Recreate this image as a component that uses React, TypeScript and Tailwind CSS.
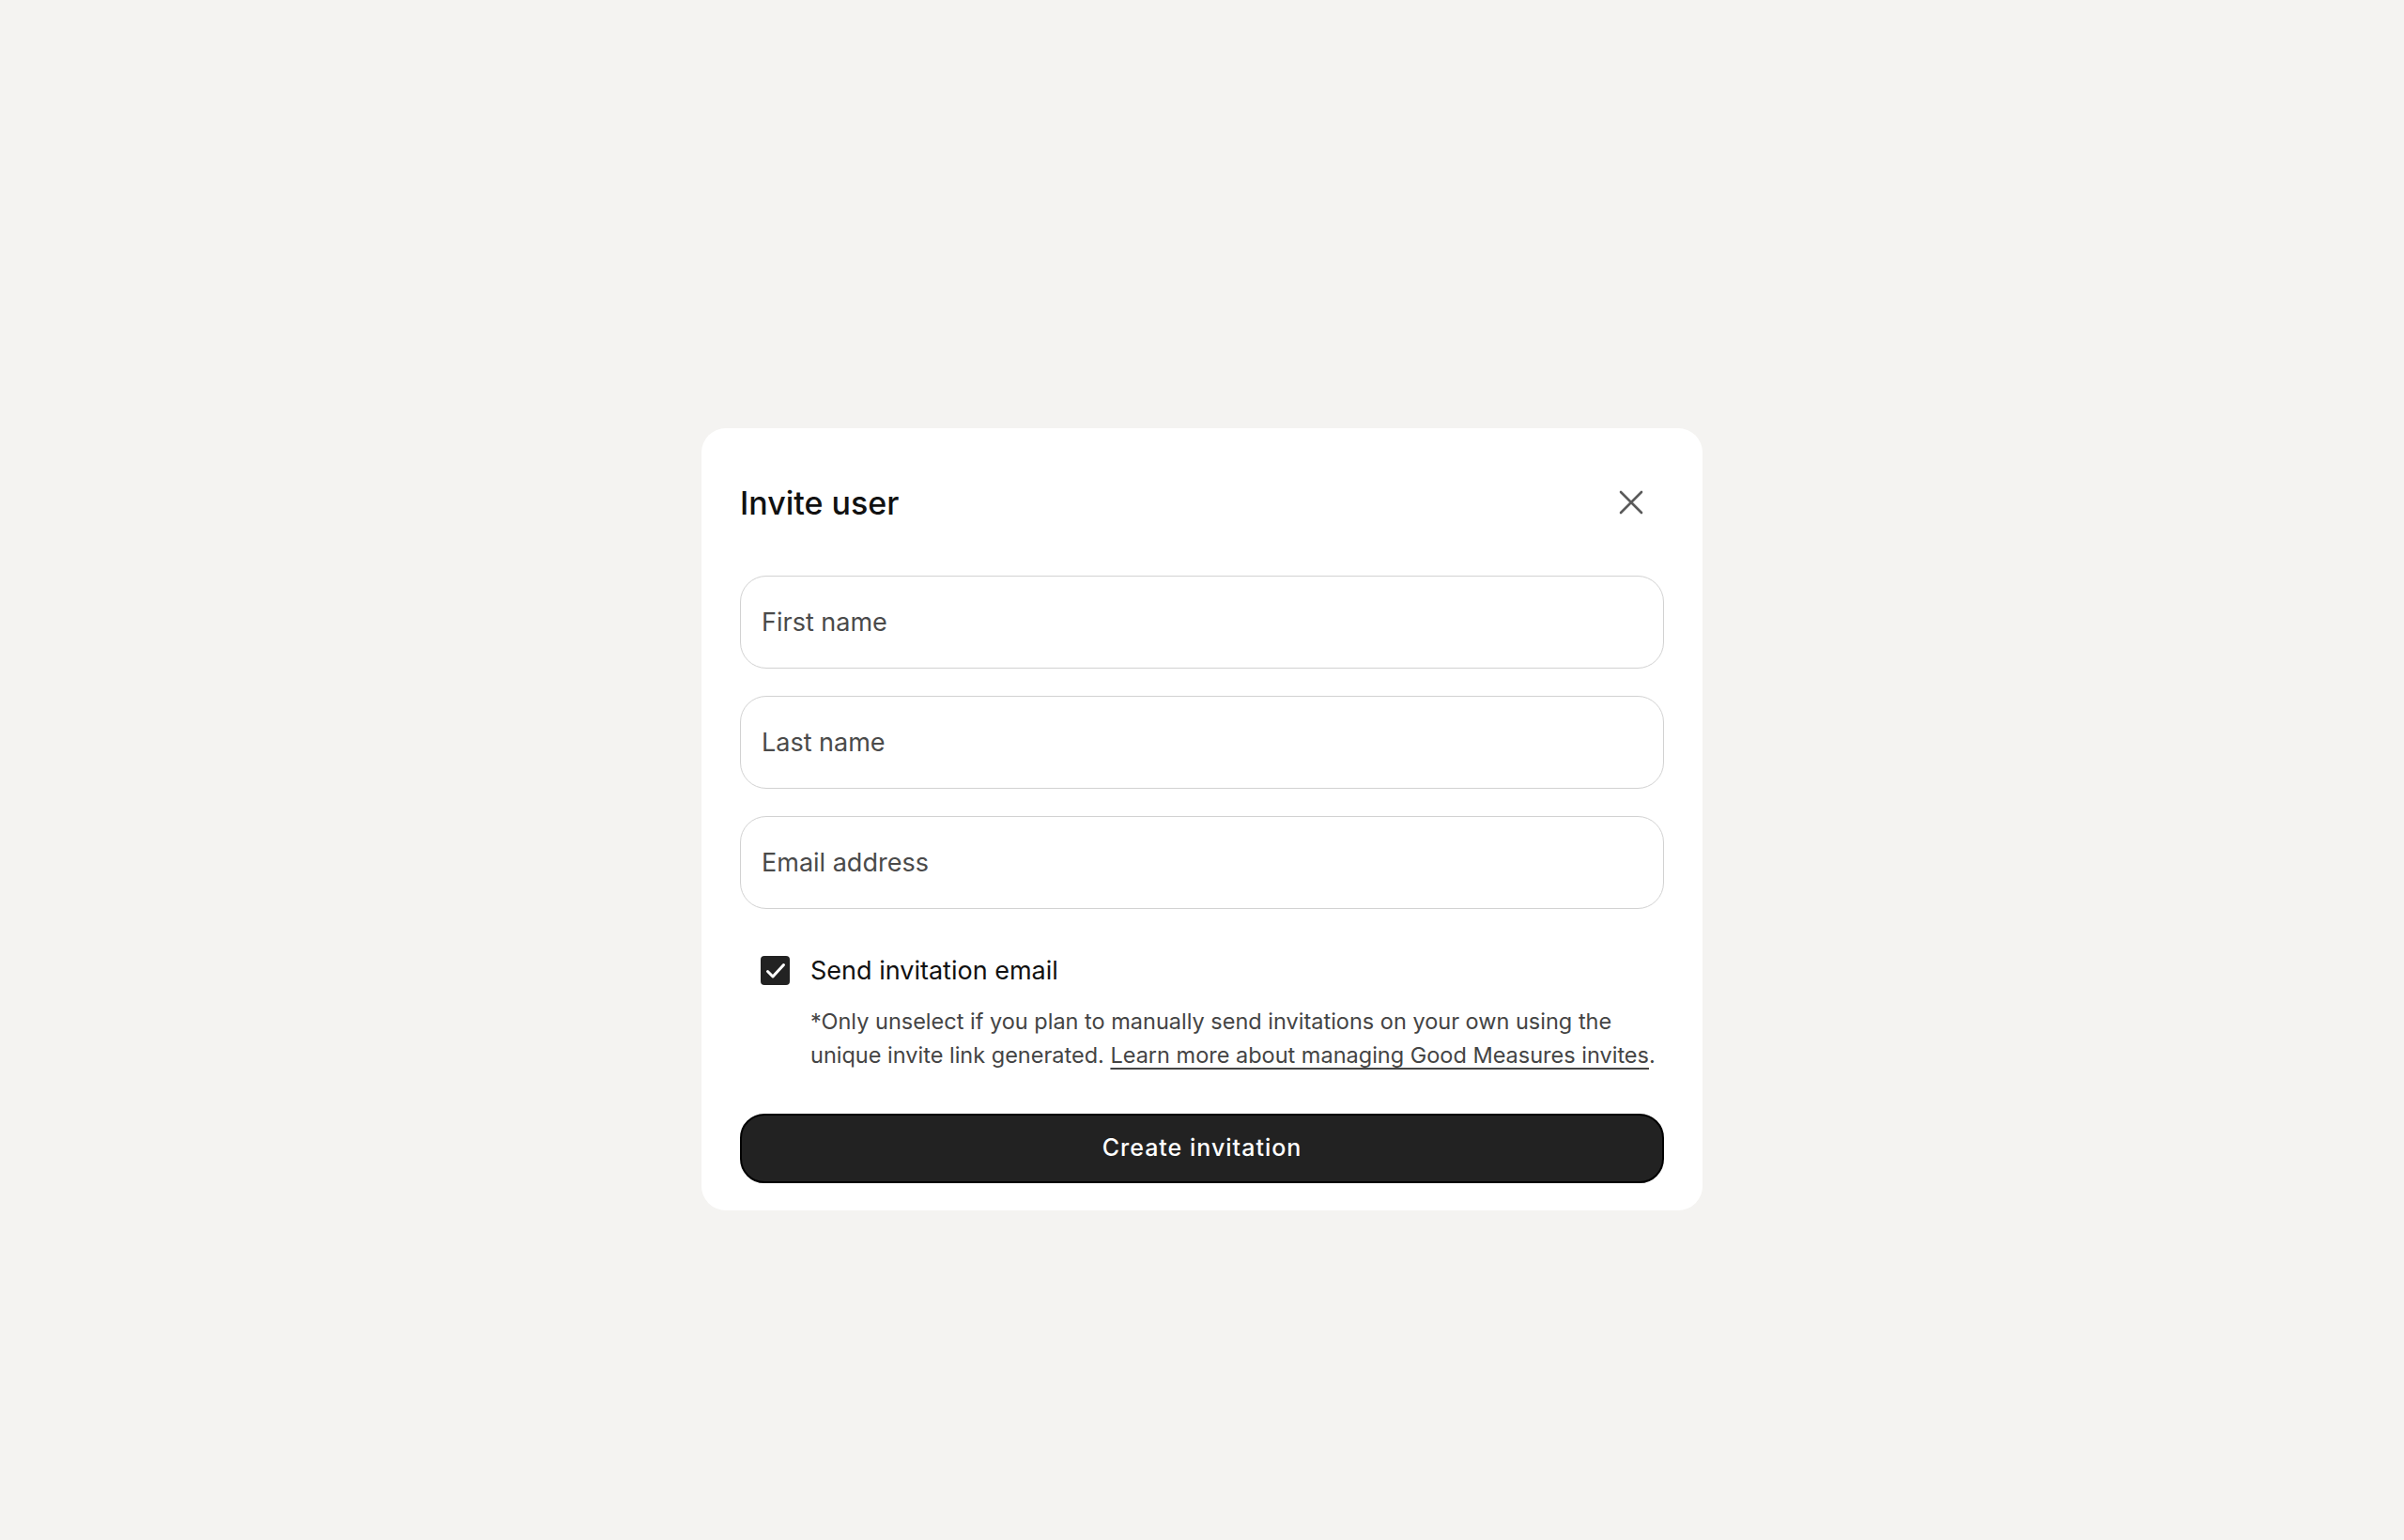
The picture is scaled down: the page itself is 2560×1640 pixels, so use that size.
import React from 'react';

const font = { fontFamily: 'Inter, "Noto Sans", sans-serif' };

const Field = ({ placeholder }: { placeholder: string }) => {
    return (
        <input
            type="text"
            placeholder={placeholder}
            className="h-[99px] w-full rounded-[28px] border border-[#d2d2d2] bg-white px-[22px] text-[27px] text-[#3a3a3a] placeholder:text-[#4a4a4a] outline-none"
        />
    );
};

const CloseIcon = () => (
    <svg width="26" height="26" viewBox="0 0 26 26" fill="none">
        <path d="M2 2L24 24M24 2L2 24" stroke="#5a5a5a" strokeWidth="2.6" strokeLinecap="round" />
    </svg>
);

const CheckBox = () => (
    <div className="flex h-[31px] w-[31px] items-center justify-center rounded-[4px] bg-[#222222]">
        <svg width="22" height="18" viewBox="0 0 22 18" fill="none">
            <path d="M2.5 9.5L8 15L19.5 2.5" stroke="white" strokeWidth="3" strokeLinecap="round" strokeLinejoin="round" />
        </svg>
    </div>
);

export default function App() {
    return (
        <div className="min-h-[1640px] w-full bg-[#f4f3f1] pt-[456px]" style={font}>
            <div className="mx-auto flex w-[1066px] flex-col rounded-[26px] bg-white px-[41px] pt-[42px] pb-[29px]">
                <div className="flex h-[74px] items-center justify-between">
                    <h1 className="text-[34px] font-medium text-[#111111]">Invite user</h1>
                    <button className="mr-[22px] flex items-center justify-center">
                        <CloseIcon />
                    </button>
                </div>

                <div className="mt-[41px] flex flex-col gap-[29px]">
                    <Field placeholder="First name" />
                    <Field placeholder="Last name" />
                    <Field placeholder="Email address" />
                </div>

                <div className="mt-[50px] flex h-[31px] items-center gap-[22px] pl-[22px]">
                    <CheckBox />
                    <span className="text-[27px] leading-[31px] text-[#111111]">Send invitation email</span>
                </div>
                <p className="mt-[21px] pl-[75px] text-[23.5px] leading-[36px] text-[#444444]">
                    *Only unselect if you plan to manually send invitations on your own using the
                    <br />
                    unique invite link generated.{' '}
                    <a href="#" className="underline underline-offset-[5px]">
                        Learn more about managing Good Measures invites
                    </a>
                    .
                </p>

                <button className="mt-[44px] h-[74px] w-full rounded-[26px] border-2 border-black bg-[#222222] text-[25px] font-medium tracking-[0.04em] text-white">
                    Create invitation
                </button>
            </div>
        </div>
    );
}
